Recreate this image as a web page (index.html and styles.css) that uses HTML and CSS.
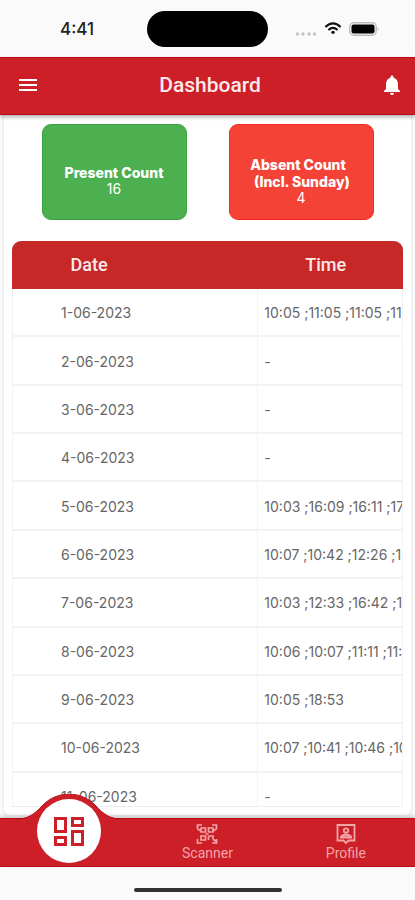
FILE: index.html
```html
<!DOCTYPE html>
<html lang="en">
<head>
<meta charset="utf-8">
<meta name="viewport" content="width=device-width, initial-scale=1">
<title>Dashboard</title>
<link rel="stylesheet" href="styles.css">
</head>
<body>
<div class="status">
  <time class="clock">4:41</time>
  <div class="island"></div>
  <div class="signals">
    <svg class="dots" width="22" height="4" viewBox="0 0 22 4" fill="#c4c4c4"><circle cx="2.5" cy="2" r="1.7"/><circle cx="8" cy="2" r="1.7"/><circle cx="14" cy="2" r="1.7"/><circle cx="19.5" cy="2" r="1.7"/></svg>
    <svg width="18" height="13" viewBox="0 0 20 14" fill="none" stroke="#111" stroke-width="2.3"><path d="M1.5 5.3Q10-2.8 18.5 5.3M4.9 8.6Q10 3.9 15.1 8.6"/><circle cx="10" cy="11.3" r="1.9" fill="#111" stroke="none"/></svg>
    <svg width="31" height="14" viewBox="0 0 31 14"><rect x=".8" y=".8" width="26.400" height="12.400" rx="4" fill="none" stroke="#bbb" stroke-width="1.400"/><rect x="2.500" y="2.500" width="23" height="9" rx="2" fill="#000"/><path d="M28.500 5Q31 7 28.500 9Z" fill="#bbb"/></svg>
  </div>
</div>
<header class="appbar">
  <button class="icon-btn" aria-label="Menu"><svg width="20" height="14" viewBox="0 0 20 14" stroke="#fff" stroke-width="2"><path d="M1 2H19M1 7H19M1 12H19"/></svg></button>
  <h1>Dashboard</h1>
  <button class="icon-btn" aria-label="Notifications"><svg width="18" height="22" viewBox="3 1.500 18 21" fill="#fff"><path d="M12 22c1.100 0 2-.9 2-2h-4c0 1.100.9 2 2 2zm6-6v-5c0-3.070-1.630-5.640-4.500-6.320V4c0-.83-.67-1.500-1.500-1.500s-1.500.67-1.500 1.500v.68C7.640 5.360 6 7.920 6 11v5l-2 2v1h16v-1l-2-2z"/></svg></button>
</header>
<main>
  <section class="counts">
    <article class="count present"><h2>Present Count</h2><p>16</p></article>
    <article class="count absent"><h2>Absent Count<br><span>(Incl. Sunday)</span></h2><p>4</p></article>
  </section>
  <section class="log">
    <table>
      <thead><tr><th class="date">Date</th><th>Time</th></tr></thead>
      <tbody>
        <tr><td>1-06-2023</td><td>10:05 ;11:05 ;11:05 ;11</td></tr>
        <tr><td>2-06-2023</td><td>-</td></tr>
        <tr><td>3-06-2023</td><td>-</td></tr>
        <tr><td>4-06-2023</td><td>-</td></tr>
        <tr><td>5-06-2023</td><td>10:03 ;16:09 ;16:11 ;17</td></tr>
        <tr><td>6-06-2023</td><td>10:07 ;10:42 ;12:26 ;12</td></tr>
        <tr><td>7-06-2023</td><td>10:03 ;12:33 ;16:42 ;16</td></tr>
        <tr><td>8-06-2023</td><td>10:06 ;10:07 ;11:11 ;11:</td></tr>
        <tr><td>9-06-2023</td><td>10:05 ;18:53</td></tr>
        <tr><td>10-06-2023</td><td>10:07 ;10:41 ;10:46 ;10</td></tr>
        <tr><td>11-06-2023</td><td>-</td></tr>
      </tbody>
    </table>
  </section>
</main>
<nav class="tabs">
  <a href="#dashboard" class="tab current" aria-label="Dashboard">
    <svg class="bump" width="104" height="72" viewBox="0 0 104 72"><path d="M0 25C10 25 17 21 26 11C40-3.500 64-3.500 78 11C87 21 94 25 104 25V72H0Z" fill="#cc1f27"/><path d="M0 25C10 25 17 21 26 11C40-3.500 64-3.500 78 11C87 21 94 25 104 25" fill="none" stroke="#bd0b12"/><circle cx="52" cy="37" r="32" fill="#fff"/><g fill="none" stroke="#cc1f27" stroke-width="3"><rect x="38.500" y="24.500" width="10" height="13"/><rect x="55.500" y="24.500" width="10" height="7"/><rect x="38.500" y="43.500" width="10" height="7"/><rect x="55.500" y="37.500" width="10" height="13"/></g></svg>
  </a>
  <a href="#scanner" class="tab">
    <svg width="22" height="20" viewBox="0 0 22 20" fill="none" stroke="currentColor" stroke-width="1.7"><path d="M1.500 5V1H6M16 1H20.500V5M20.500 15V19H16M6 19H1.500V15M5 4H9.500V8H5ZM12.500 4H17V8H12.500ZM5 12H9.500V16H5ZM1.500 5L5 7M20.500 5L17 7M9.500 10H12.500M12.500 12H17V15M12.500 12V16M17 15L20.500 18"/></svg>
    <span>Scanner</span>
  </a>
  <a href="#profile" class="tab">
    <svg width="20" height="20" viewBox="0 0 20 20" fill="none" stroke="currentColor" stroke-width="1.800"><path d="M1.500 1H18.500V16.500H12.500L10 19L7.500 16.500H1.500Z"/><circle cx="10" cy="6.500" r="2.200"/><path d="M5 13.500V12.500Q10 8.500 15 12.500V13.500Z" fill="currentColor" fill-opacity=".6"/></svg>
    <span>Profile</span>
  </a>
</nav>
<footer><div class="home"></div></footer>
</body>
</html>
```
FILE: styles.css
```css
* { box-sizing: border-box; }
body {
  margin: 0;
  height: 100vh;
  display: flex;
  flex-direction: column;
  background: #fafafa;
  font-family: Inter, "Liberation Sans", sans-serif;
  overflow: hidden;
}
h1, h2, p { margin: 0; }
.status {
  height: 57px;
  flex: none;
  display: grid;
  grid-template-columns: 1fr 121px 1fr;
  align-items: center;
}
.clock { font-size: 17px; font-weight: 500; padding-left: 60px; color: #222; }
.island { height: 36px; border-radius: 18px; background: #000; }
.signals { display: flex; align-items: center; justify-content: flex-end; gap: 7px; padding-right: 35px; }
.dots { align-self: flex-end; }
.appbar {
  height: 58px;
  flex: none;
  display: flex;
  align-items: center;
  justify-content: space-between;
  padding: 0 9px 2px 14px;
  background: #cc1f27;
  border: solid #bd0b12;
  border-width: 1px 0;
  box-shadow: 0 2px 4px #0005;
  z-index: 1;
}
.appbar h1 { font: 500 21px/24px Roboto, sans-serif; color: #fde9ea; }
.icon-btn { width: 28px; height: 40px; padding: 0; border: 0; background: none; display: grid; place-items: center; }
main {
  flex: 1;
  min-height: 0;
  display: flex;
  flex-direction: column;
  gap: 21px;
  margin: 0 4px 3px;
  padding: 9px 8px 8px;
  background: #fff;
  border-radius: 0 0 6px 6px;
  box-shadow: 0 0 3px #0002;
}
.counts { display: flex; justify-content: center; gap: 42px; }
.count {
  width: 145px;
  height: 96px;
  border-radius: 9px;
  display: flex;
  flex-direction: column;
  justify-content: center;
  padding-top: 17px;
  text-align: center;
  color: #fff;
}
.count h2 { font-size: 14px; line-height: 17px; font-weight: 800; }
.count p { font-size: 14px; line-height: 16px; }
.present { background: #4caf50; border: 1px solid #36a33c; }
.absent { background: #f44336; border: 1px solid #ee2c22; }
.absent h2 { padding-right: 6px; }
.absent span { padding-left: 8px; }
.log { flex: 1; min-height: 0; overflow: hidden; border-radius: 9px 9px 0 0; border-bottom: 1px solid #eee; }
table { width: 100%; height: 580px; table-layout: fixed; border-collapse: separate; border-spacing: 0; }
thead tr { height: 48px; }
th { padding: 0; background: #c62828; color: #fdeaea; font: 500 18px/24px Roboto, sans-serif; }
.date { width: 63%; padding-right: 92px; }
th:last-child { padding-right: 10px; }
td {
  padding: 1px 0 0 6px;
  overflow: hidden;
  white-space: nowrap;
  font-size: 14px;
  line-height: 17px;
  color: #666;
  border-bottom: 2px solid #f3f3f3;
  border-right: 1px solid #f3f3f3;
}
td:first-child { padding-left: 48px; border-left: 1px solid #f3f3f3; }
.tabs {
  height: 49px;
  flex: none;
  display: grid;
  grid-template-columns: repeat(3, 1fr);
  background: #cc1f27;
  border: solid #bd0b12;
  border-width: 1px 0;
  box-shadow: 0 -2px 4px #0003;
}
.tab {
  display: flex;
  flex-direction: column;
  align-items: center;
  justify-content: center;
  gap: 1px;
  color: #f2a5a8;
  text-decoration: none;
  font: 400 14px/17px Roboto, sans-serif;
}
.current { position: relative; }
.bump { position: absolute; bottom: 0; left: calc(50% - 52px); }
footer { height: 33px; flex: none; display: flex; justify-content: center; align-items: center; padding-top: 13px; }
.home { width: 148px; height: 4px; border-radius: 2px; background: #333; }
```
